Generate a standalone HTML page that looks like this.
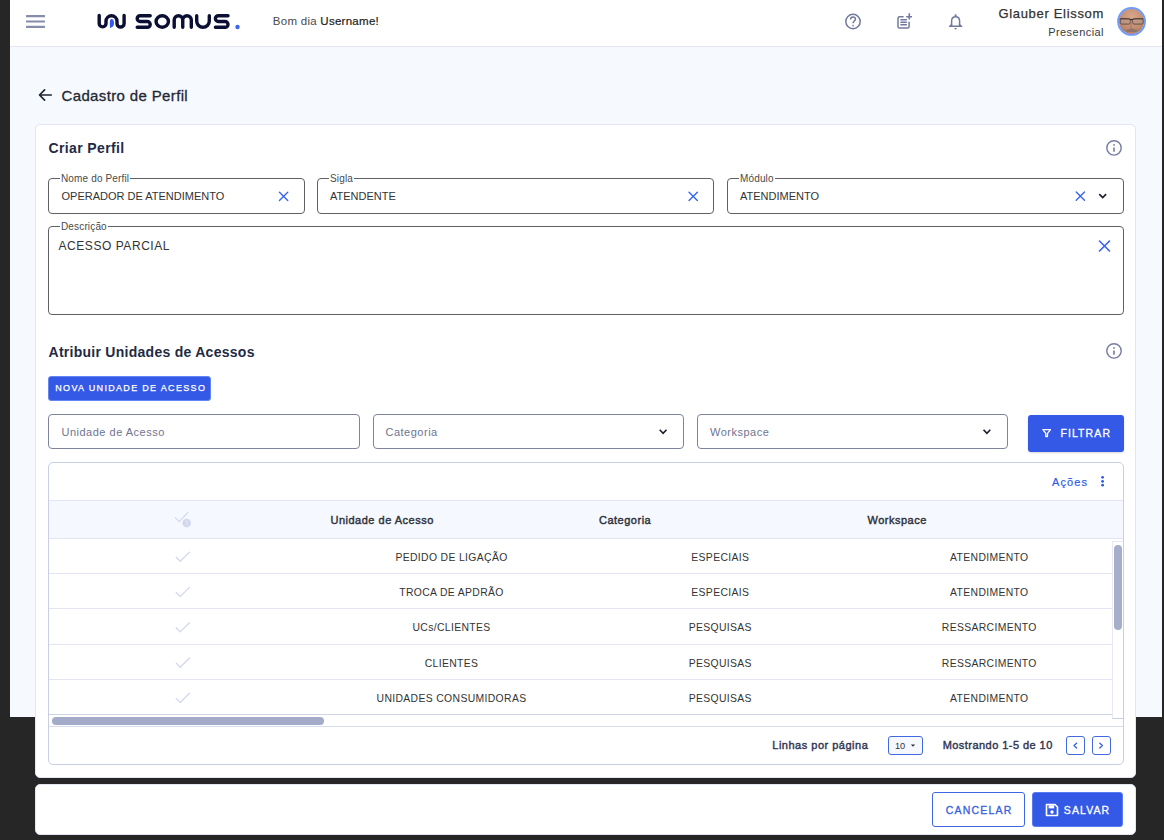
<!DOCTYPE html>
<html><head><meta charset="utf-8">
<style>
*{box-sizing:border-box;margin:0;padding:0}
html,body{width:1164px;height:840px;overflow:hidden;background:#262626;font-family:"Liberation Sans",sans-serif;color:#333}
.a{position:absolute}
.t{position:absolute;white-space:nowrap;line-height:1}
#page{left:10px;top:0;width:1152px;height:717px;background:#f6f9fe}
#hdr{left:10px;top:0;width:1152px;height:47px;background:#fff;border-bottom:1px solid #e3e6f2}
.card{position:absolute;background:#fff;border:1px solid #e2e5f2;border-radius:5px}
.fld{position:absolute;border:1px solid #5f6066;border-radius:4px;background:#fff}
.lbl{position:absolute;top:-5px;left:11px;background:#fff;padding:0 1px;font-size:10px;color:#4a4a4a;line-height:10px;white-space:nowrap;letter-spacing:0.15px}
.val{position:absolute;font-size:11px;color:#333;white-space:nowrap;line-height:1}
.inp{position:absolute;border:1px solid #7f849c;border-radius:4px;background:#fff}
.ph{position:absolute;font-size:11px;color:#6f7491;white-space:nowrap;line-height:1;letter-spacing:0.5px}
.hd{position:absolute;font-size:11px;color:#2e3038;white-space:nowrap;line-height:1;letter-spacing:0.5px;-webkit-text-stroke:0.4px #2e3038}
.cell{position:absolute;font-size:10.4px;color:#333;white-space:nowrap;line-height:1;transform:translateX(-50%);letter-spacing:0.35px}
.rowb{position:absolute;left:49px;width:1074px;height:1px;background:#e3e5f3}
</style></head><body>
<div id="page" class="a"></div>
<div id="hdr" class="a"></div>

<svg class="a" style="left:0;top:0" width="1164" height="46" viewBox="0 0 1164 46">
 <g fill="#878cab">
  <rect x="26" y="15" width="19" height="2.2" rx="0.5"/>
  <rect x="26" y="20.4" width="19" height="2.2" rx="0.5"/>
  <rect x="26" y="25.8" width="19" height="2.2" rx="0.5"/>
 </g>
 <g fill="none" stroke="#0a0f33" stroke-width="3.4" stroke-linecap="round" stroke-linejoin="round">
  <path d="M99.2 15.4 V23.5 A3.4 3.4 0 0 0 106 23.5 V21.3 A5.5 5.5 0 0 1 117 21.3 V23.5 A3.55 3.55 0 0 0 124.1 23.5 V15.4"/>
  <path d="M150.2 15.7 H140.1 A2.9 2.9 0 0 0 140.1 21.5 H147.3 A2.9 2.9 0 0 1 147.3 27.3 H137.2"/>
  <ellipse cx="162.25" cy="21.5" rx="6.2" ry="5.8"/>
  <path d="M174.2 27.3 V20 A4.27 4.27 0 0 1 182.75 20 V27.3 M182.75 20 A4.27 4.27 0 0 1 191.3 20 V27.3"/>
  <path d="M196.7 15.7 V21 A6.3 6.3 0 0 0 209.3 21 V15.7"/>
  <path d="M228 15.7 H218.3 A2.9 2.9 0 0 0 218.3 21.5 H225.1 A2.9 2.9 0 0 1 225.1 27.3 H215.4"/>
 </g>
 <path fill="#3459f0" d="M111.8 19.1 C113.9 19.3 114.3 22.5 113.9 24.6 C113.5 26.6 111.6 27.9 110.1 28 C109.8 25.5 109.8 23 109.9 21 C110 19.8 110.8 19 111.8 19.1 Z"/>
 <circle cx="237.5" cy="27" r="2.2" fill="#3d64f5"/>
 <g fill="none" stroke="#73799e" stroke-width="1.5">
  <circle cx="853" cy="21.5" r="7.2"/>
  <path d="M850.6 19.4 C850.6 17.9 851.7 17 853 17 C854.4 17 855.4 17.9 855.4 19.2 C855.4 20.9 853.1 21.1 853.1 23.2"/>
  <path d="M903.6 16.8 H899.6 Q898 16.8 898 18.4 V26.4 Q898 28 899.6 28 H907.5 Q909.1 28 909.1 26.4 V21.8" stroke-linejoin="round"/>
  <path d="M900.9 19.7 H906.4 M900.9 22.3 H906.4 M900.9 24.8 H906.4" stroke-width="1.4" stroke-linecap="round"/>
  <path d="M909.3 13.3 V19.5 M906.2 16.7 H912" stroke-width="1.6"/>
  <path d="M949.6 26.3 H961.6 M951.6 26.3 V21.2 C951.6 18.4 953.4 16.8 955.6 16.8 C957.8 16.8 959.6 18.4 959.6 21.2 V26.3 M949.8 26.2 L951.8 24.4 M961.4 26.2 L959.4 24.4" stroke-linejoin="round" stroke-linecap="round"/>
 </g>
 <circle cx="853.1" cy="25.6" r="0.9" fill="#73799e"/>
 <path d="M954.1 28 H957.1 L955.6 29.7 Z" fill="#73799e"/>
 <circle cx="955.6" cy="15.3" r="1.1" fill="#73799e"/>
</svg>
<div class="t" style="left:272.8px;top:16.2px;font-size:11.5px;color:#555;letter-spacing:0.27px"><span style="color:#4a4a4a">Bom dia </span><span style="color:#222;-webkit-text-stroke:0.2px #222">Username!</span></div>
<div class="t" style="right:60px;top:7px;font-size:13px;color:#333;letter-spacing:0.68px;-webkit-text-stroke:0.25px #333">Glauber Elissom</div>
<div class="t" style="right:60px;top:26.5px;font-size:11px;color:#3a3a3a;letter-spacing:0.45px">Presencial</div>
<svg class="a" style="left:1114px;top:4px" width="36" height="36" viewBox="0 0 36 36">
 <defs>
  <clipPath id="avc"><circle cx="17.55" cy="17.45" r="12.6"/></clipPath>
  <radialGradient id="skin" cx="50%" cy="35%" r="60%"><stop offset="0" stop-color="#d8a78a"/><stop offset="0.6" stop-color="#c08a70"/><stop offset="1" stop-color="#93614b"/></radialGradient>
 </defs>
 <g clip-path="url(#avc)">
  <rect x="0" y="0" width="36" height="36" fill="url(#skin)"/>
  <path d="M5 14.9 Q11 14.2 16.5 15.2 M18.5 15.2 Q24 14.2 30 14.9" stroke="#3a302b" stroke-width="0.9" fill="none"/>
  <rect x="6.3" y="14.9" width="10" height="5.2" rx="1.5" fill="#a89890" fill-opacity="0.35" stroke="#4f423a" stroke-width="0.8"/>
  <rect x="18.6" y="14.9" width="10.6" height="5.2" rx="1.5" fill="#a89890" fill-opacity="0.35" stroke="#4f423a" stroke-width="0.8"/>
  <path d="M16.3 15.6 H18.6" stroke="#2a221e" stroke-width="1.2"/>
  <path d="M17 17 Q17.6 22 16.4 24.2 Q17.6 25.2 19.6 24.3" fill="none" stroke="#a06a55" stroke-width="0.7"/>
  <ellipse cx="17.6" cy="26.6" rx="6.2" ry="1.6" fill="#8d7668"/>
  <ellipse cx="17.8" cy="29.3" rx="4.8" ry="1.3" fill="#c08274"/>
 </g>
 <circle cx="17.55" cy="17.45" r="13.4" fill="none" stroke="#6e9cf7" stroke-width="2"/>
</svg>


<!-- page title -->
<svg class="a" style="left:36px;top:86px" width="18" height="18" viewBox="0 0 18 18"><path d="M15.2 9 H4.2 M8.6 3.9 L3.5 9 L8.6 14.1" fill="none" stroke="#1f2530" stroke-width="1.7" stroke-linecap="round" stroke-linejoin="round"/></svg>
<div class="t" style="left:61.5px;top:88px;font-size:15px;color:#222834;letter-spacing:0.36px;-webkit-text-stroke:0.3px #222834">Cadastro de Perfil</div>

<!-- main card -->
<div class="card" style="left:35px;top:124px;width:1101px;height:654px"></div>
<div class="t" style="left:48.5px;top:140.5px;font-size:14px;font-weight:700;color:#232a44;letter-spacing:0.37px">Criar Perfil</div>
<svg class="a" style="left:1104px;top:138px" width="20" height="20" viewBox="0 0 20 20"><circle cx="10" cy="9.9" r="7.2" fill="none" stroke="#777ca2" stroke-width="1.4"/><path d="M10 9.4 V13.7" stroke="#777ca2" stroke-width="1.6"/><rect x="9.2" y="6.2" width="1.6" height="1.6" fill="#777ca2"/></svg>

<!-- fields row 1 -->
<div class="fld" style="left:48px;top:178px;width:257px;height:36px"><span class="lbl">Nome do Perfil</span></div>
<div class="val" style="left:61.5px;top:191px">OPERADOR DE ATENDIMENTO</div>
<div class="fld" style="left:317px;top:178px;width:397px;height:36px"><span class="lbl">Sigla</span></div>
<div class="val" style="left:330px;top:191px">ATENDENTE</div>
<div class="fld" style="left:727px;top:178px;width:397px;height:36px"><span class="lbl">Módulo</span></div>
<div class="val" style="left:740px;top:191px">ATENDIMENTO</div>

<!-- descricao -->
<div class="fld" style="left:48px;top:226px;width:1076px;height:88.5px"><span class="lbl">Descrição</span></div>
<div class="val" style="left:58.5px;top:240px;font-size:12px;letter-spacing:0.55px">ACESSO PARCIAL</div>

<svg class="a" style="left:0;top:0" width="1164" height="840" viewBox="0 0 1164 840"><path d="M279.45000000000005 192.15 L287.75 200.45000000000002 M287.75 192.15 L279.45000000000005 200.45000000000002" stroke="#3563f0" stroke-width="1.35" stroke-linecap="round"/><path d="M689.0500000000001 192.15 L697.35 200.45000000000002 M697.35 192.15 L689.0500000000001 200.45000000000002" stroke="#3563f0" stroke-width="1.35" stroke-linecap="round"/><path d="M1076.1999999999998 192.0 L1084.5 200.3 M1084.5 192.0 L1076.1999999999998 200.3" stroke="#3563f0" stroke-width="1.35" stroke-linecap="round"/><path d="M1099.3 194.1 L1102.7 197.6 L1106.1000000000001 194.1" fill="none" stroke="#1a1f2e" stroke-width="1.65" stroke-linecap="butt" stroke-linejoin="miter"/><path d="M1099.5 241.0 L1109.5 251.0 M1109.5 241.0 L1099.5 251.0" stroke="#3563f0" stroke-width="1.6" stroke-linecap="round"/></svg>
<!-- section 2 -->
<div class="t" style="left:48.5px;top:344.5px;font-size:14px;font-weight:700;color:#232a44;letter-spacing:0.27px">Atribuir Unidades de Acessos</div>
<svg class="a" style="left:1104px;top:341px" width="20" height="20" viewBox="0 0 20 20"><circle cx="10" cy="9.9" r="7.2" fill="none" stroke="#777ca2" stroke-width="1.4"/><path d="M10 9.4 V13.7" stroke="#777ca2" stroke-width="1.6"/><rect x="9.2" y="6.2" width="1.6" height="1.6" fill="#777ca2"/></svg>
<div class="a" style="left:48px;top:376px;width:163px;height:25px;background:#3459e6;border:1px solid #6486f5;border-radius:3px"></div>
<div class="t" style="left:55.3px;top:384.2px;font-size:9px;color:#fff;letter-spacing:1.32px;-webkit-text-stroke:0.25px #fff">NOVA UNIDADE DE ACESSO</div>

<!-- filters -->
<div class="inp" style="left:48px;top:414px;width:311.5px;height:35px"></div>
<div class="ph" style="left:61.5px;top:427px">Unidade de Acesso</div>
<div class="inp" style="left:373px;top:414px;width:311px;height:35px"></div>
<div class="ph" style="left:385.5px;top:427px">Categoria</div>
<div class="inp" style="left:697px;top:414px;width:311px;height:35px"></div>
<div class="ph" style="left:710px;top:427px">Workspace</div>
<div class="a" style="left:1027.5px;top:414.5px;width:96px;height:37px;background:#3459e6;border-radius:3px;box-shadow:0 1px 2px rgba(0,0,0,.15)"></div>
<div class="t" style="left:1060.4px;top:427.8px;font-size:10.5px;color:#fff;letter-spacing:1.1px;-webkit-text-stroke:0.3px #fff">FILTRAR</div>
<svg class="a" style="left:0;top:0" width="1164" height="840" viewBox="0 0 1164 840">
 <path d="M659.7 429.8 L663.1 433.3 L666.5 429.8" fill="none" stroke="#1a1f2e" stroke-width="1.65" stroke-linecap="butt" stroke-linejoin="miter"/>
 <path d="M983.5 429.8 L986.9 433.3 L990.3 429.8" fill="none" stroke="#1a1f2e" stroke-width="1.65" stroke-linecap="butt" stroke-linejoin="miter"/>
 <path d="M1042.9 429.6 H1050.5 L1047.5 433.4 V436.6 H1045.8 V433.4 Z" fill="none" stroke="#fff" stroke-width="1.3" stroke-linejoin="round"/>
</svg>


<!-- table -->
<div class="a" style="left:48px;top:462px;width:1075.5px;height:302.5px;border:1px solid #c9cee4;border-radius:5px;background:#fff"></div>
<div class="t" style="left:1052px;top:477px;font-size:11px;color:#2c5be6;letter-spacing:1.1px;-webkit-text-stroke:0.2px #2c5be6">Ações</div>
<svg class="a" style="left:1098px;top:473px" width="10" height="16" viewBox="0 0 10 16"><circle cx="4.6" cy="4.3" r="1.4" fill="#2c5be6"/><circle cx="4.6" cy="8.4" r="1.4" fill="#2c5be6"/><circle cx="4.6" cy="12.2" r="1.4" fill="#2c5be6"/></svg>
<div class="a" style="left:49px;top:500px;width:1073.5px;height:38.5px;background:#f5f8fe;border-top:1px solid #e2e5f3;border-bottom:1px solid #e2e5f3"></div>
<div class="hd" style="left:330.5px;top:515px">Unidade de Acesso</div>
<div class="hd" style="left:599px;top:515px">Categoria</div>
<div class="hd" style="left:867.5px;top:515px">Workspace</div>
<svg class="a" style="left:0;top:0" width="1164" height="840" viewBox="0 0 1164 840">
 <path d="M175.2 517.6 L179.2 521.6 L187.8 512.6" fill="none" stroke="#d5d9ed" stroke-width="1.3" stroke-linecap="round"/>
 <circle cx="186.7" cy="523" r="4.3" fill="#d3d7ed"/>
 <path d="M186.2 521 L187 520.6 V525.4" stroke="#e8eaf6" stroke-width="0.9" fill="none"/>
 <path d="M176.2 557.2 L180.2 561.3 L189.4 552.1" fill="none" stroke="#d3d7ec" stroke-width="1.3" stroke-linecap="round" stroke-linejoin="round"/>
 <path d="M176.2 592.5 L180.2 596.6 L189.4 587.4" fill="none" stroke="#d3d7ec" stroke-width="1.3" stroke-linecap="round" stroke-linejoin="round"/>
 <path d="M176.2 627.8 L180.2 631.9 L189.4 622.7" fill="none" stroke="#d3d7ec" stroke-width="1.3" stroke-linecap="round" stroke-linejoin="round"/>
 <path d="M176.2 663.1 L180.2 667.2 L189.4 658.0" fill="none" stroke="#d3d7ec" stroke-width="1.3" stroke-linecap="round" stroke-linejoin="round"/>
 <path d="M176.2 698.4 L180.2 702.5 L189.4 693.3" fill="none" stroke="#d3d7ec" stroke-width="1.3" stroke-linecap="round" stroke-linejoin="round"/>
</svg>
<div class="a" style="left:49px;top:573px;width:1063px;height:1px;background:#e3e5f4"></div>
<div class="a" style="left:49px;top:608px;width:1063px;height:1px;background:#e3e5f4"></div>
<div class="a" style="left:49px;top:644px;width:1063px;height:1px;background:#e3e5f4"></div>
<div class="a" style="left:49px;top:679px;width:1063px;height:1px;background:#e3e5f4"></div>
<div class="cell" style="left:451.5px;top:552.6px">PEDIDO DE LIGAÇÃO</div><div class="cell" style="left:720.3px;top:552.6px">ESPECIAIS</div><div class="cell" style="left:989.3px;top:552.6px">ATENDIMENTO</div>
<div class="cell" style="left:451.5px;top:587.9px">TROCA DE APDRÃO</div><div class="cell" style="left:720.3px;top:587.9px">ESPECIAIS</div><div class="cell" style="left:989.3px;top:587.9px">ATENDIMENTO</div>
<div class="cell" style="left:451.5px;top:623.2px">UCs/CLIENTES</div><div class="cell" style="left:720.3px;top:623.2px">PESQUISAS</div><div class="cell" style="left:989.3px;top:623.2px">RESSARCIMENTO</div>
<div class="cell" style="left:451.5px;top:658.5px">CLIENTES</div><div class="cell" style="left:720.3px;top:658.5px">PESQUISAS</div><div class="cell" style="left:989.3px;top:658.5px">RESSARCIMENTO</div>
<div class="cell" style="left:451.5px;top:693.8px">UNIDADES CONSUMIDORAS</div><div class="cell" style="left:720.3px;top:693.8px">PESQUISAS</div><div class="cell" style="left:989.3px;top:693.8px">ATENDIMENTO</div>

<!-- v scrollbar -->
<div class="a" style="left:1111.5px;top:541px;width:11px;height:177.5px;border-left:1px solid #e8e9f2;border-top:1px solid #e8e9f2;border-bottom:1px solid #c9cee4;background:#fff"></div>
<div class="a" style="left:1114px;top:545px;width:8px;height:85px;border-radius:4px;background:#a6aec9"></div>
<!-- h scrollbar -->
<div class="a" style="left:49px;top:714px;width:1063px;height:1px;background:#cfd3e6"></div>
<div class="a" style="left:49px;top:725.5px;width:1073.5px;height:1px;background:#d9dcec"></div>
<div class="a" style="left:51.5px;top:716.7px;width:272.2px;height:8.2px;border-radius:4.1px;background:#a3abc8"></div>
<!-- footer -->
<div class="t" style="left:772.3px;top:740.2px;font-size:11px;color:#2f3652;letter-spacing:0.5px;-webkit-text-stroke:0.4px #2f3652">Linhas por página</div>
<div class="a" style="left:888px;top:736px;width:34.5px;height:19px;border:1px solid #4169e1;border-radius:3px;background:#f5f8ff"></div>
<div class="t" style="left:895px;top:742px;font-size:9.2px;color:#333">10</div>
<svg class="a" style="left:908.7px;top:743.2px" width="8" height="6" viewBox="0 0 8 6"><path d="M1.8 1.5 H6.2 L4 3.8 Z" fill="#333"/></svg>
<div class="t" style="left:942.7px;top:740.2px;font-size:11px;color:#2f3652;letter-spacing:0.45px;-webkit-text-stroke:0.4px #2f3652">Mostrando 1-5 de 10</div>
<div class="a" style="left:1066px;top:736px;width:18.5px;height:19px;border:1px solid #4169e1;border-radius:3px"></div>
<div class="a" style="left:1091.5px;top:736px;width:19px;height:19px;border:1px solid #4169e1;border-radius:3px"></div>
<svg class="a" style="left:0;top:0" width="1164" height="840" viewBox="0 0 1164 840">
 <path d="M1076.6 743.2 L1074 745.6 L1076.6 748" fill="none" stroke="#3560e0" stroke-width="1.3" stroke-linecap="round" stroke-linejoin="round"/>
 <path d="M1099.8 743.2 L1102.4 745.6 L1099.8 748" fill="none" stroke="#3560e0" stroke-width="1.3" stroke-linecap="round" stroke-linejoin="round"/>
</svg>

<!-- bottom card -->
<div class="card" style="left:35px;top:784px;width:1101px;height:51px"></div>
<div class="a" style="left:932px;top:792px;width:93px;height:35px;border:1px solid #3e67e8;border-radius:3px;background:#fff"></div>
<div class="t" style="left:945.8px;top:805px;font-size:10.5px;color:#3560e0;letter-spacing:1.2px;-webkit-text-stroke:0.3px #3560e0">CANCELAR</div>
<div class="a" style="left:1032px;top:792px;width:91px;height:34.5px;background:#3459e6;border:1px solid #5a7cf2;border-radius:3px"></div>
<svg class="a" style="left:1045px;top:802.5px" width="14" height="14" viewBox="0 0 14 14"><path d="M1.5 1.5 H10 L12.5 4 V12.5 H1.5 Z" fill="none" stroke="#fff" stroke-width="1.6" stroke-linejoin="round"/><rect x="3.6" y="2.2" width="5.6" height="3.2" fill="#fff"/><circle cx="7" cy="9" r="1.7" fill="#fff"/></svg>
<div class="t" style="left:1063.8px;top:805px;font-size:10.5px;color:#fff;letter-spacing:1.1px;-webkit-text-stroke:0.3px #fff">SALVAR</div>
</body></html>
